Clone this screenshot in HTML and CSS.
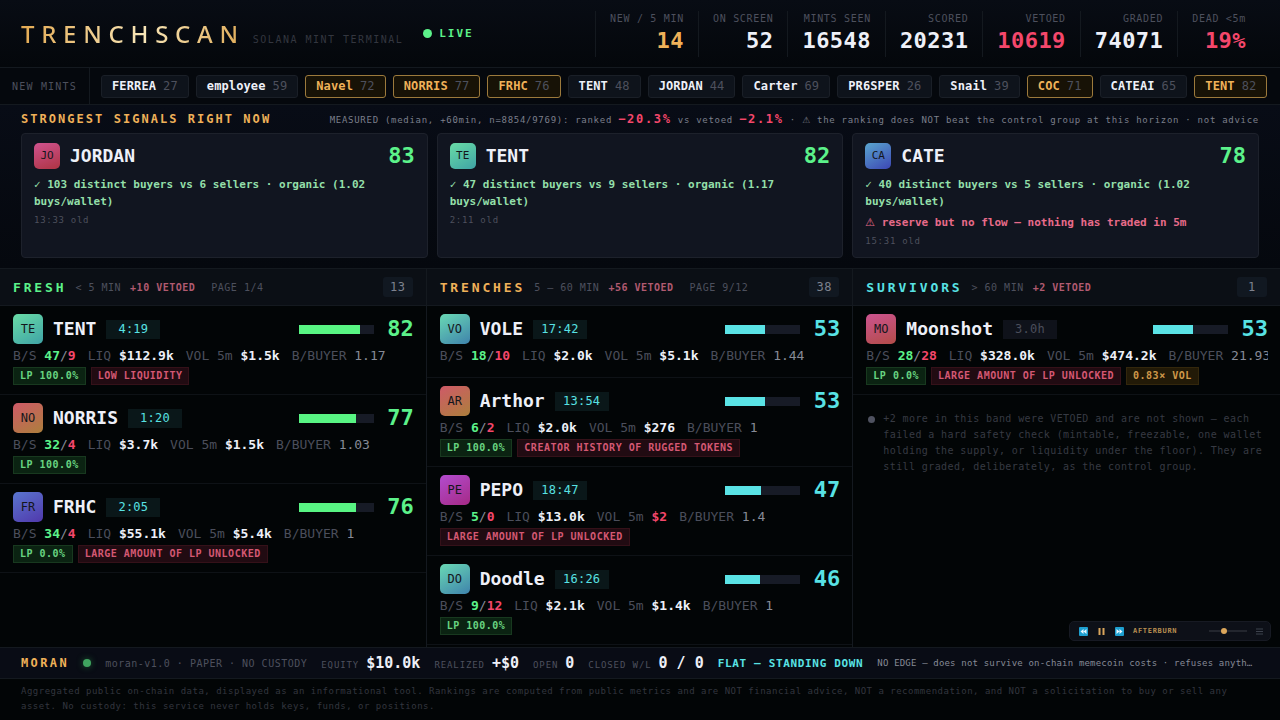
FILE: index.html
```html
<!DOCTYPE html>
<html lang="en">
  <head>
    <meta charset="utf-8">
    <title>TRENCHSCAN</title>
    <link rel="stylesheet" href="styles.css">
  </head>
  <body>
    <header class="topbar">
      <h1 class="brand">TRENCHSCAN</h1>
      <span class="tagline">SOLANA MINT TERMINAL</span>
      <span class="live"><i class="live-dot"></i>LIVE</span>
      <div class="stats">
        <div class="stat"><span class="stat-label">NEW / 5 MIN</span><b class="stat-value gold">14</b></div>
        <div class="stat"><span class="stat-label">ON SCREEN</span><b class="stat-value">52</b></div>
        <div class="stat"><span class="stat-label">MINTS SEEN</span><b class="stat-value">16548</b></div>
        <div class="stat"><span class="stat-label">SCORED</span><b class="stat-value">20231</b></div>
        <div class="stat"><span class="stat-label">VETOED</span><b class="stat-value red">10619</b></div>
        <div class="stat"><span class="stat-label">GRADED</span><b class="stat-value">74071</b></div>
        <div class="stat"><span class="stat-label">DEAD &lt;5m</span><b class="stat-value red">19%</b></div>
      </div>
    </header>

    <div class="ticker">
      <span class="ticker-label">NEW MINTS</span>
      <div class="ticker-track">
        <span class="chip"><b>FERREA</b>27</span>
        <span class="chip"><b>employee</b>59</span>
        <span class="chip hot"><b>Navel</b>72</span>
        <span class="chip hot"><b>NORRIS</b>77</span>
        <span class="chip hot"><b>FRHC</b>76</span>
        <span class="chip"><b>TENT</b>48</span>
        <span class="chip"><b>JORDAN</b>44</span>
        <span class="chip"><b>Carter</b>69</span>
        <span class="chip"><b>PR6SPER</b>26</span>
        <span class="chip"><b>Snail</b>39</span>
        <span class="chip hot"><b>COC</b>71</span>
        <span class="chip"><b>CATEAI</b>65</span>
        <span class="chip hot"><b>TENT</b>82</span>
      </div>
    </div>

    <section class="signals">
      <div class="signals-head">
        <h2 class="signals-title">STRONGEST SIGNALS RIGHT NOW</h2>
        <p class="measured">MEASURED (median, +60min, n=8854/9769): ranked <b>−20.3%</b> vs vetoed <b>−2.1%</b> · <span class="sign">⚠</span> the ranking does NOT beat the control group at this horizon · not advice</p>
      </div>
      <div class="cards">
        <article class="card">
          <div class="card-top">
            <span class="avatar small rose">JO</span>
            <h3 class="name">JORDAN</h3>
            <b class="score green">83</b>
          </div>
          <p class="reason">✓ 103 distinct buyers vs 6 sellers · organic (1.02 buys/wallet)</p>
          <p class="old">13:33 old</p>
        </article>
        <article class="card">
          <div class="card-top">
            <span class="avatar small mint">TE</span>
            <h3 class="name">TENT</h3>
            <b class="score green">82</b>
          </div>
          <p class="reason">✓ 47 distinct buyers vs 9 sellers · organic (1.17 buys/wallet)</p>
          <p class="old">2:11 old</p>
        </article>
        <article class="card">
          <div class="card-top">
            <span class="avatar small sky">CA</span>
            <h3 class="name">CATE</h3>
            <b class="score green">78</b>
          </div>
          <p class="reason">✓ 40 distinct buyers vs 5 sellers · organic (1.02 buys/wallet)</p>
          <p class="reason warn"><span class="sign">⚠</span> reserve but no flow — nothing has traded in 5m</p>
          <p class="old">15:31 old</p>
        </article>
      </div>
    </section>

    <main class="columns">
      <section class="column">
        <div class="column-head">
          <h2 class="column-title green">FRESH</h2>
          <span class="band">&lt; 5 MIN</span>
          <span class="vetoed">+10 VETOED</span>
          <span class="page">PAGE 1/4</span>
          <span class="count">13</span>
        </div>
        <article class="row">
          <div class="row-top">
            <span class="avatar mint">TE</span>
            <h3 class="name">TENT</h3>
            <span class="age">4:19</span>
            <span class="bar"><i class="fill-green" style="width: 82%"></i></span>
            <b class="score green">82</b>
          </div>
          <div class="meta">
            <span>B/S <b class="green">47</b><em>/</em><b class="red">9</b></span>
            <span>LIQ <b>$112.9k</b></span>
            <span>VOL 5m <b>$1.5k</b></span>
            <span>B/BUYER <em>1.17</em></span>
          </div>
          <div class="tags"><span class="tag ok">LP 100.0%</span><span class="tag bad">LOW LIQUIDITY</span></div>
        </article>
        <article class="row">
          <div class="row-top">
            <span class="avatar clay">NO</span>
            <h3 class="name">NORRIS</h3>
            <span class="age">1:20</span>
            <span class="bar"><i class="fill-green" style="width: 77%"></i></span>
            <b class="score green">77</b>
          </div>
          <div class="meta">
            <span>B/S <b class="green">32</b><em>/</em><b class="red">4</b></span>
            <span>LIQ <b>$3.7k</b></span>
            <span>VOL 5m <b>$1.5k</b></span>
            <span>B/BUYER <em>1.03</em></span>
          </div>
          <div class="tags"><span class="tag ok">LP 100.0%</span></div>
        </article>
        <article class="row">
          <div class="row-top">
            <span class="avatar indigo">FR</span>
            <h3 class="name">FRHC</h3>
            <span class="age">2:05</span>
            <span class="bar"><i class="fill-green" style="width: 76%"></i></span>
            <b class="score green">76</b>
          </div>
          <div class="meta">
            <span>B/S <b class="green">34</b><em>/</em><b class="red">4</b></span>
            <span>LIQ <b>$55.1k</b></span>
            <span>VOL 5m <b>$5.4k</b></span>
            <span>B/BUYER <em>1</em></span>
          </div>
          <div class="tags"><span class="tag ok">LP 0.0%</span><span class="tag bad">LARGE AMOUNT OF LP UNLOCKED</span></div>
        </article>
      </section>

      <section class="column">
        <div class="column-head">
          <h2 class="column-title gold">TRENCHES</h2>
          <span class="band">5 — 60 MIN</span>
          <span class="vetoed">+56 VETOED</span>
          <span class="page">PAGE 9/12</span>
          <span class="count">38</span>
        </div>
        <article class="row">
          <div class="row-top">
            <span class="avatar teal">VO</span>
            <h3 class="name">VOLE</h3>
            <span class="age">17:42</span>
            <span class="bar"><i class="fill-cyan" style="width: 53%"></i></span>
            <b class="score cyan">53</b>
          </div>
          <div class="meta">
            <span>B/S <b class="green">18</b><em>/</em><b class="red">10</b></span>
            <span>LIQ <b>$2.0k</b></span>
            <span>VOL 5m <b>$5.1k</b></span>
            <span>B/BUYER <em>1.44</em></span>
          </div>
        </article>
        <article class="row">
          <div class="row-top">
            <span class="avatar clay">AR</span>
            <h3 class="name">Arthor</h3>
            <span class="age">13:54</span>
            <span class="bar"><i class="fill-cyan" style="width: 53%"></i></span>
            <b class="score cyan">53</b>
          </div>
          <div class="meta">
            <span>B/S <b class="green">6</b><em>/</em><b class="red">2</b></span>
            <span>LIQ <b>$2.0k</b></span>
            <span>VOL 5m <b>$276</b></span>
            <span>B/BUYER <em>1</em></span>
          </div>
          <div class="tags"><span class="tag ok">LP 100.0%</span><span class="tag bad">CREATOR HISTORY OF RUGGED TOKENS</span></div>
        </article>
        <article class="row">
          <div class="row-top">
            <span class="avatar violet">PE</span>
            <h3 class="name">PEPO</h3>
            <span class="age">18:47</span>
            <span class="bar"><i class="fill-cyan" style="width: 47%"></i></span>
            <b class="score cyan">47</b>
          </div>
          <div class="meta">
            <span>B/S <b class="green">5</b><em>/</em><b class="red">0</b></span>
            <span>LIQ <b>$13.0k</b></span>
            <span>VOL 5m <b class="red">$2</b></span>
            <span>B/BUYER <em>1.4</em></span>
          </div>
          <div class="tags"><span class="tag bad">LARGE AMOUNT OF LP UNLOCKED</span></div>
        </article>
        <article class="row">
          <div class="row-top">
            <span class="avatar teal">DO</span>
            <h3 class="name">Doodle</h3>
            <span class="age">16:26</span>
            <span class="bar"><i class="fill-cyan" style="width: 46%"></i></span>
            <b class="score cyan">46</b>
          </div>
          <div class="meta">
            <span>B/S <b class="green">9</b><em>/</em><b class="red">12</b></span>
            <span>LIQ <b>$2.1k</b></span>
            <span>VOL 5m <b>$1.4k</b></span>
            <span>B/BUYER <em>1</em></span>
          </div>
          <div class="tags"><span class="tag ok">LP 100.0%</span></div>
        </article>
      </section>

      <section class="column">
        <div class="column-head">
          <h2 class="column-title cyan">SURVIVORS</h2>
          <span class="band">&gt; 60 MIN</span>
          <span class="vetoed">+2 VETOED</span>
          <span class="count">1</span>
        </div>
        <article class="row">
          <div class="row-top">
            <span class="avatar coral">MO</span>
            <h3 class="name">Moonshot</h3>
            <span class="age stale">3.0h</span>
            <span class="bar"><i class="fill-cyan" style="width: 53%"></i></span>
            <b class="score cyan">53</b>
          </div>
          <div class="meta">
            <span>B/S <b class="green">28</b><em>/</em><b class="red">28</b></span>
            <span>LIQ <b>$328.0k</b></span>
            <span>VOL 5m <b>$474.2k</b></span>
            <span>B/BUYER <em>21.93</em></span>
          </div>
          <div class="tags"><span class="tag ok">LP 0.0%</span><span class="tag bad">LARGE AMOUNT OF LP UNLOCKED</span><span class="tag vol">0.83× VOL</span></div>
        </article>
        <div class="note">
          <i class="note-dot"></i>
          <p>+2 more in this band were VETOED and are not shown — each failed a hard safety check (mintable, freezable, one wallet holding the supply, or liquidity under the floor). They are still graded, deliberately, as the control group.</p>
        </div>
      </section>
    </main>

    <div class="desk">
      <b class="desk-name">MORAN</b>
      <i class="desk-dot"></i>
      <span class="desk-mode">moran-v1.0 · PAPER · NO CUSTODY</span>
      <span class="figure">EQUITY<b>$10.0k</b></span>
      <span class="figure">REALIZED<b>+$0</b></span>
      <span class="figure">OPEN<b>0</b></span>
      <span class="figure">CLOSED W/L<b>0 / 0</b></span>
      <b class="stance">FLAT — STANDING DOWN</b>
      <span class="thought">NO EDGE — does not survive on-chain memecoin costs · refuses anyth…</span>
    </div>

    <footer class="disclaimer">Aggregated public on-chain data, displayed as an informational tool. Rankings are computed from public metrics and are NOT financial advice, NOT a recommendation, and NOT a solicitation to buy or sell any asset. No custody: this service never holds keys, funds, or positions.</footer>

    <div class="player">
      <button type="button" class="player-btn" aria-label="Previous">
        <svg width="9" height="9" viewBox="0 0 18 18"><rect width="18" height="18" rx="2" fill="#1d9fd0"/><path d="M9 4v10L3 9zM15 4v10L9 9z" fill="#e8f7ff"/></svg>
      </button>
      <button type="button" class="player-btn" aria-label="Pause">
        <svg width="9" height="9" viewBox="0 0 18 18"><path d="M3 2h4v14H3zM11 2h4v14h-4z" fill="#d9a55c"/></svg>
      </button>
      <button type="button" class="player-btn" aria-label="Next">
        <svg width="9" height="9" viewBox="0 0 18 18"><rect width="18" height="18" rx="2" fill="#1d9fd0"/><path d="M3 4v10l6-5zM9 4v10l6-5z" fill="#e8f7ff"/></svg>
      </button>
      <span class="track">AFTERBURN</span>
      <input type="range" class="volume" min="0" max="100" value="36" aria-label="Volume">
      <button type="button" class="player-btn" aria-label="Playlist">
        <svg width="7" height="7" viewBox="0 0 14 14"><path d="M0 2h14M0 7h14M0 12h14" stroke="#3d424d" stroke-width="2"/></svg>
      </button>
    </div>
  </body>
</html>
```
FILE: styles.css
```css
:root {
  --mono: "DejaVu Sans Mono", monospace;
  --line: #14191f;
  --text: #eef0f8;
  --dim: #4d505d;
  --faint: #33363f;
  --green: #5cf28a;
  --gold: #efb159;
  --cyan: #58e2e4;
  --red: #f4476b;
}
* {
  box-sizing: border-box;
}
body {
  margin: 0;
  min-height: 100vh;
  display: flex;
  flex-direction: column;
  background: #020506;
  color: var(--text);
  font-family: var(--mono);
  font-size: 13px;
}
h1, h2, h3, p {
  margin: 0;
}
i, em {
  font-style: normal;
}
.green { color: var(--green); }
.gold { color: var(--gold); }
.cyan { color: var(--cyan); }
.red { color: var(--red); }
.sign { font-family: "DejaVu Sans", sans-serif; }

/* top bar */
.topbar {
  display: flex;
  align-items: center;
  height: 68px;
  padding: 0 20px 0 21px;
  background: linear-gradient(#080c14, #04070b);
  border-bottom: 1px solid var(--line);
}
.brand {
  font-family: "Noto Sans", sans-serif;
  font-size: 24px;
  font-weight: 500;
  line-height: 32px;
  letter-spacing: 0.28em;
  background: linear-gradient(100deg, #e3a951 0%, #f8e6b8 55%, #dfaa55 100%);
  -webkit-background-clip: text;
  background-clip: text;
  color: transparent;
}
.tagline {
  margin: 12px 0 0 8px;
  font-size: 10px;
  letter-spacing: 0.15em;
  color: var(--faint);
}
.live {
  display: flex;
  align-items: center;
  gap: 7px;
  margin-left: 20px;
  font-size: 11px;
  font-weight: bold;
  letter-spacing: 0.18em;
  color: var(--green);
}
.live-dot {
  width: 9px;
  height: 9px;
  border-radius: 50%;
  background: #5cf28a;
}
.stats {
  display: flex;
  margin-left: auto;
}
.stat {
  display: flex;
  flex-direction: column;
  align-items: flex-end;
  height: 46px;
  padding: 2px 14px 0;
  border-left: 1px solid var(--line);
}
.stat-label {
  font-size: 10px;
  line-height: 12px;
  letter-spacing: 0.07em;
  color: var(--dim);
}
.stat-value {
  font-size: 22px;
  line-height: 32px;
  letter-spacing: 0.02em;
}

/* ticker of new mints */
.ticker {
  display: flex;
  align-items: center;
  height: 37px;
  background: #05080d;
  border-bottom: 1px solid var(--line);
}
.ticker-label {
  flex: none;
  display: flex;
  align-items: center;
  height: 100%;
  padding: 0 12px;
  border-right: 1px solid var(--line);
  font-size: 10px;
  letter-spacing: 0.12em;
  color: var(--dim);
}
.ticker-track {
  display: flex;
  gap: 7px;
  padding-left: 11px;
  overflow: hidden;
}
.chip {
  flex: none;
  display: flex;
  gap: 7px;
  padding: 0 10px;
  border: 1px solid #1a1f27;
  border-radius: 3px;
  background: #0e131b;
  font-size: 12px;
  line-height: 21px;
  letter-spacing: 0.01em;
  color: var(--dim);
}
.chip b {
  color: var(--text);
}
.chip.hot {
  border-color: #9c7a3c;
  background: #171206;
}
.chip.hot b {
  color: var(--gold);
}

/* strongest signals */
.signals {
  padding: 6px 21px 10px;
  background: linear-gradient(#080c16, #05080e);
  border-bottom: 1px solid var(--line);
}
.signals-head {
  display: flex;
  align-items: center;
  justify-content: space-between;
  height: 16px;
  margin-bottom: 6px;
}
.signals-title {
  font-size: 12px;
  line-height: 16px;
  letter-spacing: 0.17em;
  color: var(--gold);
}
.measured {
  font-size: 9px;
  line-height: 16px;
  letter-spacing: 0.08em;
  white-space: nowrap;
  color: #7b7f8b;
}
.measured b {
  font-size: 12px;
  letter-spacing: 0.14em;
  color: var(--red);
}
.cards {
  display: grid;
  grid-template-columns: repeat(3, 1fr);
  gap: 9px;
}
.card {
  padding: 9px 12px;
  border: 1px solid #1d212b;
  border-radius: 4px;
  background: #111520;
}
.card-top, .row-top {
  display: flex;
  align-items: center;
  gap: 10px;
}
.card-top {
  height: 26px;
  margin-bottom: 7px;
}
.avatar {
  flex: none;
  width: 30px;
  height: 30px;
  border-radius: 5px;
  font-size: 12px;
  line-height: 30px;
  text-align: center;
  color: #14161c;
}
.avatar.small {
  width: 26px;
  height: 26px;
  font-size: 11px;
  line-height: 26px;
}
.rose { background: linear-gradient(160deg, #d0538f, #ad3443); }
.mint { background: linear-gradient(150deg, #69dca6, #3fa3a6); }
.sky { background: linear-gradient(150deg, #5aa6cf, #3c46b4); }
.clay { background: linear-gradient(150deg, #cf5a68, #ac7f3c); }
.indigo { background: linear-gradient(150deg, #5a76cf, #5038ac); }
.teal { background: linear-gradient(150deg, #69d9b4, #3f83ac); }
.violet { background: linear-gradient(150deg, #b34ccf, #a52a86); }
.coral { background: linear-gradient(160deg, #cc5490, #b34c48); }
.name {
  font-size: 18px;
  line-height: 26px;
}
.score {
  margin-left: auto;
  font-size: 22px;
  line-height: 26px;
}
.reason {
  margin-bottom: 4px;
  font-size: 11px;
  font-weight: bold;
  line-height: 17px;
  color: #93dfa9;
}
.reason.warn {
  color: #e86b8a;
}
.reason .sign {
  font-weight: normal;
}
.old {
  font-size: 9px;
  line-height: 13px;
  letter-spacing: 0.08em;
  color: var(--dim);
}

/* age bands */
.columns {
  flex: 1;
  display: grid;
  grid-template-columns: repeat(3, 1fr);
}
.column {
  min-width: 0;
  border-right: 1px solid var(--line);
}
.column:last-child {
  border-right: none;
}
.column-head {
  display: flex;
  align-items: center;
  gap: 9px;
  height: 37px;
  padding: 0 13px;
  background: #0b0f15;
  border-bottom: 1px solid var(--line);
  font-size: 10px;
  letter-spacing: 0.05em;
}
.column-title {
  font-size: 13px;
  letter-spacing: 0.22em;
}
.band, .page {
  color: var(--dim);
}
.vetoed {
  font-weight: bold;
  color: #b05a70;
}
.page {
  margin-left: 7px;
}
.count {
  min-width: 30px;
  margin-left: auto;
  border-radius: 3px;
  background: #111821;
  font-size: 12px;
  line-height: 20px;
  text-align: center;
  color: #7d828e;
}
.row {
  min-height: 72px;
  padding: 8px 12px 9px 13px;
  border-bottom: 1px solid #0e1216;
}
.age {
  min-width: 54px;
  background: #0a1719;
  font-size: 12px;
  line-height: 19px;
  letter-spacing: 0.02em;
  text-align: center;
  color: var(--cyan);
}
.age.stale {
  background: #0f121a;
  color: #4b4e5b;
}
.bar {
  display: flex;
  width: 75px;
  height: 9px;
  margin-left: auto;
  background: #171b26;
}
.fill-green { background: #58f583; }
.fill-cyan { background: #5ae3e5; }
.row .score {
  width: 30px;
  margin-left: 0;
  text-align: right;
}
.meta {
  display: flex;
  gap: 12px;
  margin-top: 3px;
  overflow: hidden;
  font-size: 13px;
  line-height: 18px;
  white-space: nowrap;
  color: #4b4e5b;
}
.meta b:not([class]) {
  color: var(--text);
}
.meta em {
  color: #868a96;
}
.tags {
  display: flex;
  gap: 5px;
  margin-top: 2px;
}
.tag {
  padding: 0 6px;
  border: 1px solid;
  font-size: 10px;
  font-weight: bold;
  line-height: 16px;
  letter-spacing: 0.05em;
  white-space: nowrap;
}
.tag.ok {
  border-color: #18391f;
  background: #0b2312;
  color: #68d481;
}
.tag.bad {
  border-color: #351119;
  background: #210b12;
  color: #d45873;
}
.tag.vol {
  border-color: #33270c;
  background: #221a07;
  color: #cf9849;
}
.note {
  display: flex;
  gap: 8px;
  padding: 16px 13px 0 15px;
  font-size: 10px;
  line-height: 16px;
  letter-spacing: 0.04em;
  color: #373a43;
}
.note-dot {
  flex: none;
  width: 7px;
  height: 7px;
  margin-top: 5px;
  border-radius: 50%;
  background: #4f5260;
}

/* paper trading desk */
.desk {
  display: flex;
  align-items: center;
  gap: 14px;
  height: 32px;
  padding: 0 21px;
  background: #090c15;
  border: solid var(--line);
  border-width: 1px 0;
  white-space: nowrap;
}
.desk-name {
  font-size: 12px;
  letter-spacing: 0.2em;
  color: var(--gold);
}
.desk-dot {
  flex: none;
  width: 8px;
  height: 8px;
  border-radius: 50%;
  background: #3fa45f;
  box-shadow: 0 0 6px #1d5a33;
}
.desk-mode {
  font-size: 10px;
  letter-spacing: 0.05em;
  color: var(--dim);
}
.figure {
  display: flex;
  align-items: baseline;
  gap: 7px;
  font-size: 9px;
  letter-spacing: 0.1em;
  color: var(--dim);
}
.figure b {
  font-size: 15px;
  letter-spacing: 0;
  color: var(--text);
}
.stance {
  font-size: 11px;
  letter-spacing: 0.06em;
  color: var(--cyan);
}
.thought {
  flex: 1;
  min-width: 0;
  overflow: hidden;
  text-overflow: ellipsis;
  font-size: 9px;
  letter-spacing: 0.02em;
  color: #868a96;
}
.disclaimer {
  height: 41px;
  padding: 5px 21px 0;
  font-size: 9px;
  line-height: 15px;
  letter-spacing: 0.055em;
  color: var(--faint);
}

/* floating music player */
.player {
  position: fixed;
  right: 9px;
  bottom: 79px;
  display: flex;
  align-items: center;
  gap: 9px;
  width: 202px;
  height: 20px;
  padding: 0 7px 0 9px;
  border: 1px solid #171a23;
  border-radius: 5px;
  background: #0d1018;
}
.player-btn {
  display: flex;
  padding: 0;
  border: none;
  background: none;
  cursor: pointer;
}
.track {
  margin-right: auto;
  font-size: 7px;
  font-weight: bold;
  letter-spacing: 0.1em;
  color: #b98f51;
}
.volume {
  width: 38px;
  height: 8px;
  margin: 0;
  appearance: none;
  background: linear-gradient(#23262e, #23262e) center / 100% 2px no-repeat;
}
.volume::-webkit-slider-thumb {
  appearance: none;
  width: 6px;
  height: 6px;
  border-radius: 50%;
  background: #dba65b;
}
```
